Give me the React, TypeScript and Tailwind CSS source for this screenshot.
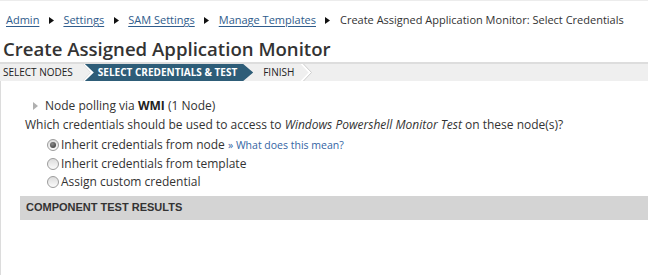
const crumbs = ["Admin", "Settings", "SAM Settings", "Manage Templates"];

function Arrow() {
  return (
    <svg width="5" height="7" viewBox="0 0 5 7" className="mx-[9.5px] shrink-0">
      <path d="M0 0 L5 3.5 L0 7 Z" fill="#111" />
    </svg>
  );
}

function Radio({ checked }: { checked?: boolean }) {
  return (
    <span className="mt-[3px] w-[12px] h-[12px] shrink-0 rounded-full border border-[#9c9c9c] bg-[linear-gradient(#dcdcdc,#fbfbfb)] flex items-center justify-center">
      {checked && <span className="w-[6px] h-[6px] rounded-full bg-[radial-gradient(circle_at_40%_35%,#8a8a8a,#333)]" />}
    </span>
  );
}

export default function App() {
  return (
    <div className="w-[648px] h-[275px] bg-white overflow-hidden border-t border-[#ececec] font-['Open_Sans',sans-serif] text-[#333]">
      <nav className="flex items-center pl-[6px] pt-[11px] text-[11px] leading-[16px]">
        {crumbs.map((c) => (
          <span key={c} className="flex items-center">
            <a className="text-[#2f5c8c] underline underline-offset-[2px]">{c}</a>
            <Arrow />
          </span>
        ))}
        <span className="text-[#333]">Create Assigned Application Monitor: Select Credentials</span>
      </nav>

      <h1 className="mt-[8px] pl-[3px] text-[18.6px] leading-[26px] font-semibold text-[#333]">
        Create Assigned Application Monitor
      </h1>

      <div className="flex items-center h-[19px] border-t-2 border-[#dddddd] bg-[#efefef] text-[10px] leading-[17px] text-[#222]">
        <span className="pl-[3px]">SELECT NODES</span>
        <svg width="14" height="17" viewBox="0 0 14 17" className="ml-[7px] -mr-[9px] shrink-0">
          <polyline points="2,-1 11,8.5 2,18" fill="none" stroke="#d2d2d2" strokeWidth="1" />
          <polyline points="3.5,-1 12.5,8.5 3.5,18" fill="none" stroke="#ffffff" strokeWidth="2" />
        </svg>
        <span className="h-[17px] pl-[13px] pr-[16px] bg-[#2e5d78] text-white font-bold [clip-path:polygon(0_0,calc(100%-10px)_0,100%_50%,calc(100%-10px)_100%,0_100%,9px_50%)]">
          SELECT CREDENTIALS &amp; TEST
        </span>
        <span className="ml-[10px]">FINISH</span>
        <svg width="14" height="17" viewBox="0 0 14 17" className="ml-[6px] shrink-0">
          <polyline points="1,-1 10,8.5 1,18" fill="none" stroke="#ffffff" strokeWidth="2" />
          <polyline points="2.5,-1 11.5,8.5 2.5,18" fill="none" stroke="#cfcfcf" strokeWidth="1" />
        </svg>
      </div>

      <div className="h-full border-l border-[#dcdcdc] pl-[19px] pt-[15px] text-[12px]">
        <div className="flex items-center pl-[13px] leading-[19px]">
          <svg width="5" height="8" viewBox="0 0 5 8" className="mr-[7px] shrink-0">
            <path d="M0 0 L5 4 L0 8 Z" fill="#b0b0b0" />
          </svg>
          <span>
            Node polling via <b className="font-bold text-[#222]">WMI</b> (1 Node)
          </span>
        </div>
        <div className="pl-[5px] leading-[19px]">
          Which credentials should be used to access to <i>Windows Powershell Monitor Test</i> on these node(s)?
        </div>
        <div className="mt-[2px] pl-[27px] leading-[18.5px]">
          <label className="flex items-start gap-[2px]">
            <Radio checked />
            <span>
              Inherit credentials from node{" "}
              <a className="text-[10.5px] text-[#3465a4]">» What does this mean?</a>
            </span>
          </label>
          <label className="flex items-start gap-[2px]">
            <Radio />
            <span>Inherit credentials from template</span>
          </label>
          <label className="flex items-start gap-[2px]">
            <Radio />
            <span>Assign custom credential</span>
          </label>
        </div>
        <div className="mt-[4px] h-[24px] flex items-center px-[6px] bg-[#d4d4d4] font-['Liberation_Sans',Arial,sans-serif] font-bold text-[11px] text-[#333]">
          COMPONENT TEST RESULTS
        </div>
      </div>
    </div>
  );
}
